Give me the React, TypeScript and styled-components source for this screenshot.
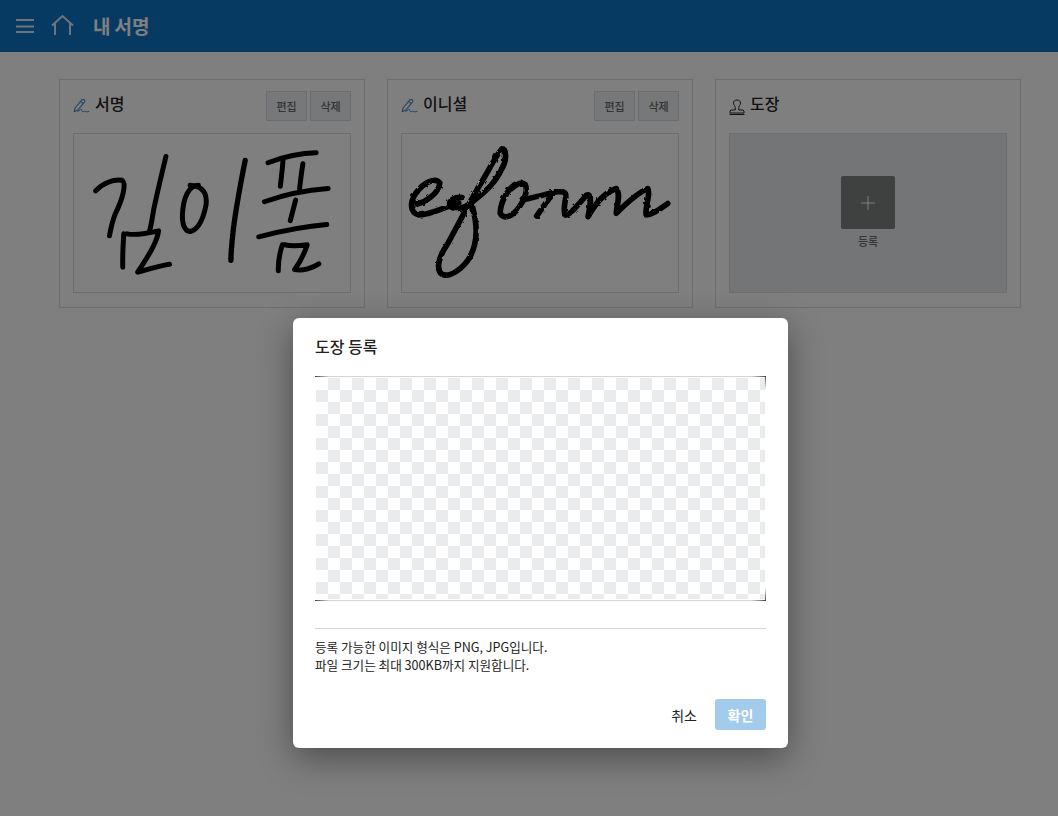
import React from 'react';
import styled, { createGlobalStyle } from 'styled-components';

const Global = createGlobalStyle`
  html, body { margin: 0; padding: 0; height: 100%; background: #fff; }
  body { font-family: "Noto Sans CJK KR", "Noto Sans", sans-serif; color: #222; }
  #root { min-height: 100%; }
`;
const Page = styled.div`width: 1058px; height: 816px; overflow: hidden; position: relative; background: #fff;`;
const TopBar = styled.header`
  height: 52px; background: #0c74c6; display: flex; align-items: center; padding-left: 16px; color: #fff;
`;
const MenuIcon = styled.svg`width: 18px; height: 18px; display: block;`;
const HomeIcon = styled.svg`width: 26px; height: 26px; display: block; margin-left: 16px; margin-top: -2px;`;
const PageTitle = styled.h1`margin: 0 0 0 17px; font-size: 19px; font-weight: 700; line-height: 26px; letter-spacing: -0.1px;`;
const Cards = styled.main`display: flex; gap: 22px; padding: 27px 0 0 59px;`;
const Card = styled.section`
  width: 306px; height: 229px; box-sizing: border-box; border: 1px solid #dcdcdc; padding: 11px 13px 14px 13px;
  display: flex; flex-direction: column; background: #fff;
`;
const CardHead = styled.div`height: 30px; display: flex; align-items: center; flex: none;`;
const IconSlot = styled.span`display: block; height: 16px; margin-bottom: 4px; flex: none;`;
const CardTitle = styled.h2`margin: 0 auto 6px 5px; font-size: 16px; font-weight: 500; line-height: 24px; color: #222;`;
const SmallBtn = styled.button`
  width: 41px; height: 30px; box-sizing: border-box; border: 1px solid #d5dade; background: #ecf0f2; color: #666;
  font: 500 11px "Noto Sans CJK KR", sans-serif; padding: 0; margin-left: 3px;
`;
const SigBox = styled.div`
  margin-top: 12px; height: 160px; box-sizing: border-box; border: 1px solid #dcdcdc; flex: none;
`;
const SigSvg = styled.svg`width: 100%; height: 100%; display: block;`;
const StampBox = styled(SigBox)`
  background: #e9eaee; display: flex; flex-direction: column; align-items: center; padding-top: 42px;
`;
const AddTile = styled.div`
  width: 54px; height: 53px; background: #7f8281; border-radius: 2px; display: flex; align-items: center; justify-content: center;
`;
const AddLabel = styled.div`font-size: 11px; font-weight: 500; color: #6a6a6a; margin-top: 4px; line-height: 16px;`;
const Overlay = styled.div`
  position: absolute; inset: 0; background: rgba(0,0,0,.5); padding: 318px 0 0 293px; box-sizing: border-box;
`;
const Modal = styled.div`
  width: 495px; height: 430px; background: #fff; border-radius: 6px; box-sizing: border-box; padding: 16px 22px 18px;
  box-shadow: 0 10px 34px rgba(0,0,0,.4); display: flex; flex-direction: column;
`;
const ModalTitle = styled.h3`margin: 0; font-size: 16px; font-weight: 500; line-height: 24px; color: #222;`;
const Canvas = styled.div`
  position: relative; margin-top: 18px; height: 225px; box-sizing: border-box; border: solid #d4d4d4; border-width: 1px 0;
  padding: 1px;
  &::before {
    content: ''; display: block; height: 100%;
    background-color: #fff;
    background-image: conic-gradient(#e9ebed 25%, #fff 0 50%, #e9ebed 0 75%, #fff 0);
    background-size: 24px 24px;
  }
`;
const Corner = styled.i<{ $v: 'top' | 'bottom'; $h: 'left' | 'right' }>`
  position: absolute; width: 14px; height: 14px; box-sizing: border-box;
  ${p => p.$v}: -1px; ${p => p.$h}: 0;
  background:
    linear-gradient(to ${p => (p.$h === 'left' ? 'right' : 'left')}, #444, transparent) ${p => p.$v} / 100% 1px no-repeat
    ${p => p.$h === 'right' ? `, linear-gradient(to ${p.$v === 'top' ? 'bottom' : 'top'}, #444, transparent) right / 1px 100% no-repeat` : ''};
`;
const Divider = styled.hr`margin: 27px 0 0; border: 0; border-top: 1px solid #d4d4d4;`;
const Help = styled.p`margin: 9px 0 0; font-size: 12.6px; line-height: 18px; color: #222;`;
const Actions = styled.div`margin-top: auto; display: flex; justify-content: flex-end; align-items: center; gap: 18px;`;
const Cancel = styled.button`border: 0; background: none; padding: 0; font: 400 14px "Noto Sans CJK KR", sans-serif; color: #222;`;
const Confirm = styled.button`
  width: 51px; height: 31px; border: 0; border-radius: 3px; background: #a2cbec; color: #fff; padding: 0;
  font: 700 14px "Noto Sans CJK KR", sans-serif;
`;

const PenIcon = () => (
  <IconSlot>
    <svg width="17" height="16" viewBox="0 0 17 16" fill="none" stroke="#3d86c2" strokeWidth="1.1" strokeLinejoin="round" strokeLinecap="round">
      <path d="M1.300 12.600 L2 9 L8.600 1.200 C9.400 .3 10.600 .2 11.300 .9 C12 1.600 11.900 2.700 11.200 3.500 L4.800 11.200 Z" />
      <path d="M7.600 2.400 L10.200 4.700" />
      <path d="M4.800 12.400 C6.500 12.200 7.500 9.800 8.300 10.400 C9 11 8.600 12.600 9.800 12.700 C10.800 12.800 11.600 12 12.400 12.400 C13.400 12.900 14.600 13 16 12.400" strokeWidth="1" />
    </svg>
  </IconSlot>
);
const StampIcon = () => (
  <IconSlot>
    <svg width="16" height="16" viewBox="0 0 16 16" fill="none" stroke="#222" strokeWidth="1" strokeLinejoin="round">
      <path d="M6.200 11 L6.200 8.500 C6.200 7 4.500 6 4.500 4 C4.500 2 6 1 8 1 C10 1 11.500 2 11.500 4 C11.500 6 9.800 7 9.800 8.500 L9.800 11 L14 11 L15 12 L15 14 L1 14 L1 12 L2 11 Z" />
      <path d="M.5 15.500 L15.500 15.500" />
    </svg>
  </IconSlot>
);

const SignHangul = () => (
  <SigSvg viewBox="40 10 832 478" preserveAspectRatio="none" fill="none" stroke="#000" strokeWidth="15" strokeLinecap="round" strokeLinejoin="round">
    <path d="M105 182 C125 160 160 145 185 150 C200 160 185 210 165 250 C155 275 150 300 147 318" />
    <path d="M317 78 C305 130 290 190 280 240 C275 270 272 290 268 302" />
    <path d="M190 312 C188 345 186 380 187 413" />
    <path d="M200 312 C230 318 265 310 295 303 C290 340 260 385 232 428 C260 420 300 408 328 404" />
    <path d="M415 165 C385 165 370 205 367 250 C365 285 375 305 390 305 C415 300 430 265 438 225 C442 190 430 168 390 165" />
    <path d="M556 90 C540 170 525 250 518 320 C515 350 513 375 513 392" strokeWidth="16" />
    <path d="M625 97 C670 80 720 68 770 67" />
    <path d="M670 90 C668 120 664 150 662 168" />
    <path d="M730 100 C725 130 722 160 720 175" />
    <path d="M614 215 C670 195 740 180 806 175" />
    <path d="M708 210 L692 272" />
    <path d="M597 321 C660 305 730 290 802 284" />
    <path d="M668 345 C660 370 655 400 656 424" />
    <path d="M675 345 C695 350 720 348 743 345 C735 370 720 400 705 420 C730 425 760 415 778 403" />
  </SigSvg>
);
const SignLatin = () => (
  <SigSvg viewBox="34 160 832 478" preserveAspectRatio="none" fill="none" stroke="#000" strokeWidth="17" strokeLinecap="round" strokeLinejoin="round">
    <defs>
      <filter id="rough" x="-5%" y="-5%" width="110%" height="110%">
        <feTurbulence type="fractalNoise" baseFrequency="0.07" numOctaves="2" seed="4" />
        <feDisplacementMap in="SourceGraphic" scale="8" />
      </filter>
    </defs>
    <g filter="url(#rough)">
      <path d="M80 372 C105 365 145 340 148 308 C135 290 100 305 75 340 C55 370 60 400 85 405 C120 405 165 380 205 368" />
      <path d="M245 375 C260 430 265 480 240 530 C220 565 180 595 155 585 C135 570 145 530 170 495 C200 440 225 390 265 320 C290 280 320 220 335 205 C350 205 350 240 335 265 C315 310 280 340 240 370 C220 385 195 390 180 380 C170 360 195 350 215 352" />
      <path d="M375 312 C350 330 330 370 330 400 C340 420 365 410 385 385 C405 355 415 330 405 312 C395 305 380 310 365 325" />
      <path d="M405 358 C430 352 460 345 495 335" />
      <path d="M495 335 C480 350 460 380 440 408" />
      <path d="M495 335 C510 335 530 330 528 350 C525 370 520 385 525 405 C535 410 560 380 590 345 C605 340 605 360 595 410 C620 365 650 335 680 325 C695 345 680 380 680 400 C700 380 740 340 775 325 C785 340 765 385 770 405 C790 405 815 385 835 370" />
    </g>
  </SigSvg>
);

export default function App() {
  return (
    <Page>
      <Global />
      <TopBar>
        <MenuIcon viewBox="0 0 18 18" stroke="#fff" strokeWidth="2"><path d="M0 3 H18 M0 9.500 H18 M0 15 H18" opacity=".85" /></MenuIcon>
        <HomeIcon viewBox="0 0 26 26" fill="none" stroke="#fff" strokeWidth="2" opacity=".85">
          <path d="M2 13.500 L12.500 4 L23 13.500" />
          <path d="M5 10.500 V23 M20 10.500 V23" />
        </HomeIcon>
        <PageTitle>내 서명</PageTitle>
      </TopBar>
      <Cards>
        <Card>
          <CardHead><PenIcon /><CardTitle>서명</CardTitle><SmallBtn>편집</SmallBtn><SmallBtn>삭제</SmallBtn></CardHead>
          <SigBox><SignHangul /></SigBox>
        </Card>
        <Card>
          <CardHead><PenIcon /><CardTitle>이니셜</CardTitle><SmallBtn>편집</SmallBtn><SmallBtn>삭제</SmallBtn></CardHead>
          <SigBox><SignLatin /></SigBox>
        </Card>
        <Card>
          <CardHead><StampIcon /><CardTitle>도장</CardTitle></CardHead>
          <StampBox>
            <AddTile>
              <svg width="14" height="14" viewBox="0 0 14 14" stroke="#fff" strokeWidth="1"><path d="M7 0 V14 M0 7 H14" /></svg>
            </AddTile>
            <AddLabel>등록</AddLabel>
          </StampBox>
        </Card>
      </Cards>
      <Overlay>
        <Modal>
          <ModalTitle>도장 등록</ModalTitle>
          <Canvas>
            <Corner $v="top" $h="left" /><Corner $v="top" $h="right" />
            <Corner $v="bottom" $h="left" /><Corner $v="bottom" $h="right" />
          </Canvas>
          <Divider />
          <Help>등록 가능한 이미지 형식은 PNG, JPG입니다.<br />파일 크기는 최대 300KB까지 지원합니다.</Help>
          <Actions><Cancel>취소</Cancel><Confirm>확인</Confirm></Actions>
        </Modal>
      </Overlay>
    </Page>
  );
}
